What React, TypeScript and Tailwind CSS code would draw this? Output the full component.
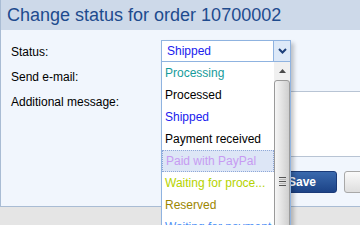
const statuses = [
  { label: "Processing", color: "text-[#169b9b]" },
  { label: "Processed", color: "text-black" },
  { label: "Shipped", color: "text-[#2020ee]" },
  { label: "Payment received", color: "text-black" },
  { label: "Paid with PayPal", color: "text-[#c79bf2]", active: true },
  { label: "Waiting for proce...", color: "text-[#b5d300]" },
  { label: "Reserved", color: "text-[#9c8600]" },
  { label: "Waiting for payment", color: "text-[#4d8ff5]" },
];

function StatusDropdown() {
  return (
    <div className="absolute left-[161px] top-[40px] w-[130px] shadow-[3px_3px_4px_rgba(0,0,0,0.22)]">
      {/* closed select */}
      <div className="flex h-[22px] border border-[#8fb3e0] bg-white">
        <div className="flex flex-1 items-center pl-[5px] text-[12px] text-[#2020ee]">Shipped</div>
        <div className="flex w-[17px] items-center justify-center border-l border-[#8fb3e0] bg-[#dde9f8]">
          <svg width="9" height="6" viewBox="0 0 9 6">
            <path d="M1 1 L4.5 4.5 L8 1" fill="none" stroke="#1c3f7a" strokeWidth="2" />
          </svg>
        </div>
      </div>

      {/* open list */}
      <div className="flex h-[240px] border border-t-0 border-[#8fb3e0] bg-white">
        <div className="flex flex-1 flex-col">
          {statuses.map((s) => (
            <div
              key={s.label}
              className={`flex h-[22px] shrink-0 items-center whitespace-nowrap px-[3px] text-[12px] ${s.color} ${
                s.active ? "border border-dotted border-[#8fa8d8] bg-[#dde6f6] px-[2px]" : ""
              }`}
            >
              {s.label}
            </div>
          ))}
        </div>
        <div className="flex w-[16px] flex-col bg-[#f0f0f0]">
          <div className="flex h-[18px] shrink-0 items-center justify-center">
            <svg width="7" height="4" viewBox="0 0 7 4">
              <path d="M0 4 L3.5 0 L7 4 Z" fill="#4a4a4a" />
            </svg>
          </div>
          <div className="flex h-[202px] shrink-0 flex-col items-center justify-center gap-[1px] rounded-t-[3px] border border-[#9a9a9a] bg-gradient-to-r from-[#f6f6f6] to-[#cfcfcf]">
            <div className="h-px w-[7px] bg-[#555]" />
            <div className="h-px w-[7px] bg-[#bbb]" />
            <div className="h-px w-[7px] bg-[#555]" />
            <div className="h-px w-[7px] bg-[#bbb]" />
            <div className="h-px w-[7px] bg-[#555]" />
          </div>
        </div>
      </div>
    </div>
  );
}

export default function App() {
  return (
    <div
      className="relative h-[225px] w-[360px] overflow-hidden bg-[#e5e5e5]"
      style={{ fontFamily: '"Liberation Sans", Arial, sans-serif' }}
    >
      <div className="h-[207px] w-[460px] border-b border-l border-[#a9bcd4] bg-[#f1f6fd]">
        <div className="h-[30px] bg-[#cdd9e9] pl-[6px] text-[18px] leading-[30px] text-[#1e4b8e]">
          Change status for order 10700002
        </div>

        <div className="pl-[10px] pt-[10px] text-[12px] text-black">
          <div className="flex h-[22px] items-center">
            <div className="w-[150px] pt-[1px]">Status:</div>
            <div className="h-[22px] w-[130px] border border-[#8fb3e0] bg-white" />
          </div>
          <div className="mt-[3px] flex h-[22px] items-center">
            <div className="w-[150px] pt-[1px]">Send e-mail:</div>
            <div className="h-[13px] w-[13px] border border-[#8a8a8a] bg-white" />
          </div>
          <div className="mt-[4px] flex">
            <div className="w-[150px] pt-[3px] leading-[16px]">Additional message:</div>
            <div className="h-[66px] w-[290px] border border-[#b8c4d4] bg-white" />
          </div>
          <div className="mt-[14px] flex h-[22px] pl-[256px]">
            <div className="flex w-[70px] items-center justify-center rounded-[3px] border border-[#1a3a78] bg-gradient-to-b from-[#3a69ad] to-[#1c4387] text-[12px] font-bold text-white">
              Save
            </div>
            <div className="ml-[7px] flex w-[110px] items-center justify-center rounded-[3px] border border-[#a8a8a8] bg-gradient-to-b from-[#fafafa] to-[#dedede] text-[12px] text-[#333]">
              Cancel
            </div>
          </div>
        </div>
      </div>

      <StatusDropdown />
    </div>
  );
}
